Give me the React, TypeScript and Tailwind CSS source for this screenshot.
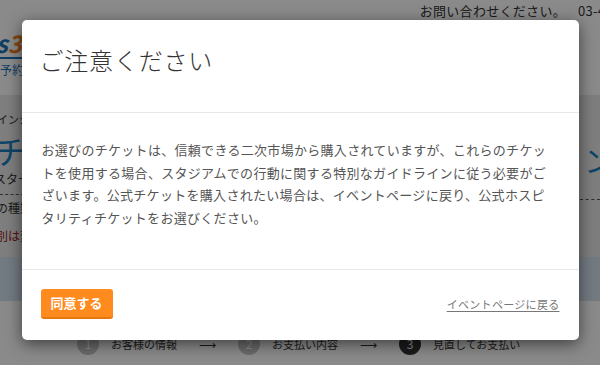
import React from 'react'

const jp = { fontFamily: '"Noto Sans CJK JP", "Noto Sans", sans-serif' }

const lines = [
  'お選びのチケットは、信頼できる二次市場から購入されていますが、これらのチケッ',
  'トを使用する場合、スタジアムでの行動に関する特別なガイドラインに従う必要がご',
  'ざいます。公式チケットを購入されたい場合は、イベントページに戻り、公式ホスピ',
  'タリティチケットをお選びください。',
]

function Step({ n, label, active }: { n: number; label: string; active?: boolean }) {
  return (
    <div className="flex items-center gap-[12px]">
      <div
        className={
          active
            ? 'w-[22px] h-[22px] rounded-full bg-[#333] text-white text-[12px] flex items-center justify-center'
            : 'w-[22px] h-[22px] rounded-full bg-[#c4c4c4] text-white text-[12px] flex items-center justify-center'
        }
      >
        {n}
      </div>
      <span className="text-[11px] text-[#333]">{label}</span>
    </div>
  )
}

export default function App() {
  return (
    <div className="relative w-[600px] h-[365px] overflow-hidden bg-white" style={jp}>
      {/* page behind the dialog */}
      <div className="flex flex-col h-full">
        <div className="h-[95px] bg-white">
          <div className="flex justify-end gap-[12px] pt-[1px] text-[13px] tracking-[0.3px] text-[#333]">
            <span>お問い合わせください。</span>
            <span className="w-[22px] overflow-hidden whitespace-nowrap">03-4</span>
          </div>
          <div className="ml-[-14px] mt-[10px] w-[40px]">
            <div className="text-[24px] font-bold italic leading-[24px]">
              <span className="text-[#1a74b8]">ts</span>
              <span className="text-[#f08020]">3</span>
            </div>
            <div className="h-[2px] bg-[#1a74b8] mt-[2px]" />
            <div className="text-[12px] text-[#1a74b8] pl-[14px] mt-[2px]">予約</div>
          </div>
        </div>
        <div className="h-[162px] bg-[#e9e9e9] flex justify-between">
          <div className="w-[24px] overflow-hidden whitespace-nowrap">
            <div className="text-[11px] text-[#333] mt-[16px] ml-[-3px]">インシ</div>
            <div className="text-[32px] text-[#1a7fc1] leading-[36px] mt-[4px] ml-[-6px]">チケ</div>
            <div className="text-[12px] text-[#333] mt-[2px] ml-[-6px]">スター</div>
            <div className="border-t border-dashed border-[#555] mt-[6px]" />
            <div className="text-[12px] text-[#333] mt-[4px] ml-[-4px]">の種類</div>
            <div className="text-[12px] text-[#a0201a] mt-[10px] ml-[-4px]">別は変</div>
          </div>
          <div className="w-[20px] overflow-hidden whitespace-nowrap">
            <div className="text-[30px] text-[#1a7fc1] leading-[36px] mt-[46px] ml-[4px]">ン</div>
            <div className="border-t border-dashed border-[#555] mt-[22px]" />
          </div>
        </div>
        <div className="h-[44px] bg-[#d4e3f1]" />
        <div className="flex-1 bg-white flex items-center gap-[22px] pl-[77px] pt-[22px]">
          <Step n={1} label="お客様の情報" />
          <span className="text-[12px] text-[#333]">⟶</span>
          <Step n={2} label="お支払い内容" />
          <span className="text-[12px] text-[#333]">⟶</span>
          <Step n={3} label="見直してお支払い" active />
        </div>
      </div>

      {/* overlay + dialog */}
      <div className="absolute inset-0 bg-black/[0.46]">
        <div className="mx-auto mt-[20px] w-[557px] bg-white rounded-[5px] shadow-[0_4px_16px_rgba(0,0,0,0.55)]">
          <div className="h-[93px] pl-[18px] pt-[25px] border-b border-[#e8e8e8]">
            <h1 className="text-[24px] font-light leading-[30px] tracking-[0.8px] text-[#333]">ご注意ください</h1>
          </div>
          <div className="px-[20px] pt-[26px] pb-[40px] border-b border-[#e8e8e8]">
            <p className="text-[13px] leading-[22.5px] tracking-[0.3px] text-[#555]">
              {lines.map((l, i) => (
                <span key={i} className="block whitespace-nowrap">
                  {l}
                </span>
              ))}
            </p>
          </div>
          <div className="flex items-center justify-between px-[19px] pt-[19px] pb-[21px]">
            <button className="w-[72px] h-[30px] rounded-[3px] bg-[#ff8a1e] border-b-2 border-[#e8770e] text-white text-[13px] font-bold">
              同意する
            </button>
            <a className="text-[11px] tracking-[0.3px] text-[#777] underline underline-offset-2">イベントページに戻る</a>
          </div>
        </div>
      </div>
    </div>
  )
}
